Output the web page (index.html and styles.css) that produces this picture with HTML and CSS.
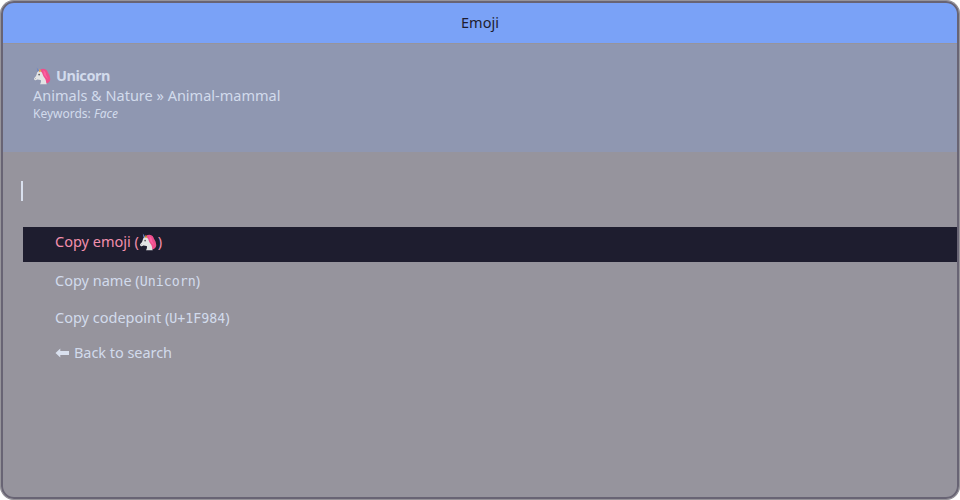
FILE: index.html
```
<!DOCTYPE html>
<html lang="en">
<head>
<meta charset="utf-8">
<title>Emoji</title>
<link rel="stylesheet" href="styles.css">
</head>
<body>
<svg class="defs" width="0" height="0" aria-hidden="true">
  <symbol id="unicorn" viewBox="0 0 18 18">
    <path fill="#ee4f8d" d="M7.500 2.300C10.500 1 13.500 2 14.500 4.500c.3 2 2.200 3 2.300 5 .2 1.500.6 2 .4 3.500-.4 1.500-1.300 2.600-3.500 3.600L9.500 11z"/>
    <path fill="#ff5fa2" d="M10.300 3.500c2 .6 2.700 2.200 2.800 4 .2 1.700 1.700 2.500 1.600 4.500L11 8z"/>
    <path fill="#e3e4e5" d="M5.300 4.200C7.500 3.300 9 4.800 9.700 7.500c.6 2.500 3 4 3.300 6.500.1 1.600.5 2.500.8 3.300H7c.8-1.500 1.300-2.600.8-4.200-1.500.2-2.800-1-3.900-.3-1 .8-2.500.5-2.900-.8-.1-1.200 1.400-2 2-3C4 7.500 3.500 5.200 5.300 4.200z"/>
    <path fill="#6c86c4" d="M3.800.6 6.200 3.700 4.500 4.700z"/>
    <path fill="#f3a53b" d="M6.700 1.800 8.300 4.200 5.900 5.200z"/>
    <ellipse fill="#37393d" cx="6.100" cy="7.600" rx=".7" ry=".9"/>
    <circle fill="#8d8f94" cx="2.500" cy="11.500" r=".4"/>
  </symbol>
</svg>
<div class="window">
  <header class="titlebar"><span>Emoji</span></header>
  <section class="message">
    <div class="name"><svg class="emoji"><use href="#unicorn"/></svg><b>Unicorn</b></div>
    <div class="category"><span>Animals &amp; Nature » Animal-mammal</span></div>
    <div class="keywords"><span>Keywords: </span><i>Face</i></div>
  </section>
  <div class="entry"><div class="caret"></div></div>
  <ul class="list">
    <li class="selected"><span>Copy emoji (</span><svg class="emoji"><use href="#unicorn"/></svg><span class="close">)</span></li>
    <li class="item-name"><span>Copy name (</span><code>Unicorn</code><span>)</span></li>
    <li class="item-code"><span>Copy codepoint (</span><code>U+1F984</code><span>)</span></li>
    <li class="item-back"><svg class="arrow" viewBox="0 0 15 10"><path d="M.5 5 5.300.5V3H14V7H5.300V9.500z"/></svg><span>Back to search</span></li>
  </ul>
</div>
</body>
</html>
```
FILE: styles.css
```
*, *::after { box-sizing: border-box; }
body {
  margin: 0;
  background: #fff;
  font-family: "Noto Sans", "Open Sans", sans-serif;
  font-size: 14.5px;
  line-height: 20px;
  color: #d2dbec;
}
.defs { position: absolute; }
.window {
  width: 960px;
  height: 500px;
  padding: 1px;
  background: #96949d;
  border-radius: 14px;
  overflow: hidden;
}
.window::after {
  content: "";
  position: absolute;
  left: 1px;
  top: 1px;
  width: 958px;
  height: 498px;
  border: 2px solid #686474;
  border-radius: 13px;
  outline: 1px solid #96949a;
  pointer-events: none;
}
.titlebar {
  height: 41px;
  margin: 1px 1px 1px;
  background: #7aa2f7;
  color: #1e1d2f;
  text-align: center;
  line-height: 41px;
  border-radius: 11px 11px 0 0;
}
.message {
  height: 108px;
  margin: 0 2px;
  padding: 22px 30px 0;
  background: #8f97b1;
}
.name { height: 20px; display: flex; align-items: center; }
.name b { letter-spacing: -0.45px; padding-bottom: 2px; }
.name .emoji { margin-right: 5px; }
.emoji { width: 18px; height: 18px; flex: none; }
.category { height: 20px; line-height: 19px; }
.keywords { font-size: 12px; line-height: 16px; white-space: pre; }
.entry { height: 75px; padding: 29px 20px 0; }
.caret { width: 2px; height: 20px; background: #d9e0ee; }
.list { list-style: none; margin: 0 2px 0 22px; padding: 0; }
.list li { display: flex; align-items: center; padding-left: 32px; white-space: pre; }
.list .selected { height: 35px; background: #1e1d2f; color: #f28fad; padding-bottom: 5px; }
.selected span { padding-bottom: 2px; }
.selected .close { margin-left: 1px; }
.list .item-name { height: 38px; padding-bottom: 2px; }
.list .item-code { height: 36px; padding-bottom: 2px; }
.list .item-back { height: 35px; padding-bottom: 3px; }
code { font: 13.3px/20px "DejaVu Sans Mono", monospace; padding-top: 3px; }
.arrow { width: 15px; height: 10px; margin: 2px 4px 0 0; fill: #d9e0ee; }
.item-back span { letter-spacing: -0.05px; }
```
